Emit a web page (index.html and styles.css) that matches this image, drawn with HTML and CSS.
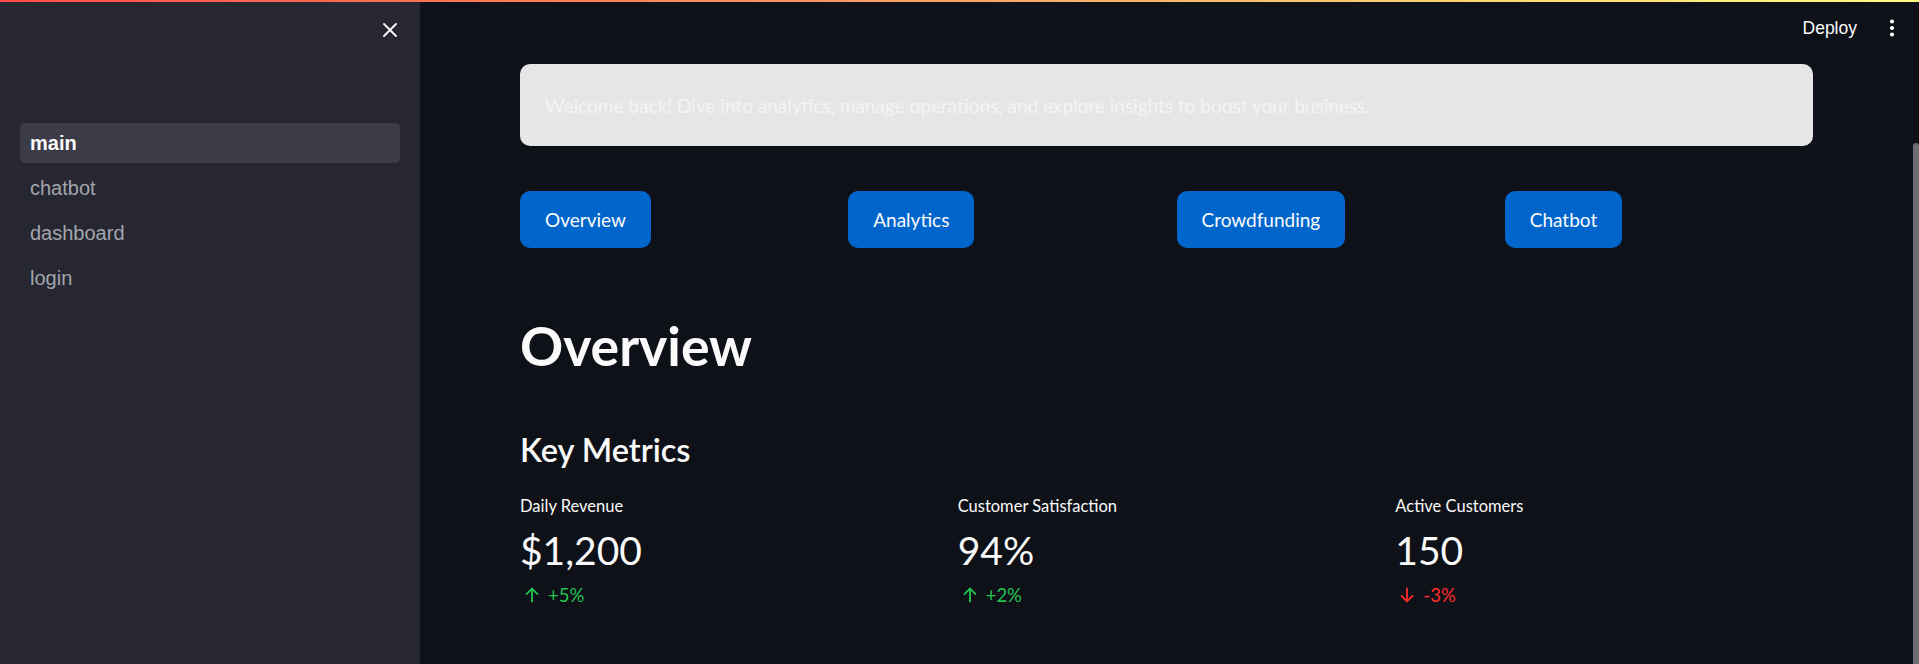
FILE: index.html
```html
<!DOCTYPE html>
<html>
<head>
<meta charset="utf-8">
<link rel="stylesheet" href="styles.css">
</head>
<body>
<div class="decoration"></div>
<div class="app">
  <aside class="sidebar">
    <div class="sidebar-head">
      <button class="close-btn" aria-label="Close sidebar">
        <svg width="16" height="16" viewBox="0 0 16 16"><path d="M2 2 L14 14 M14 2 L2 14" stroke="#fafafa" stroke-width="1.9" stroke-linecap="round"/></svg>
      </button>
    </div>
    <nav class="nav">
      <a class="nav-item active">main</a>
      <a class="nav-item">chatbot</a>
      <a class="nav-item">dashboard</a>
      <a class="nav-item">login</a>
    </nav>
  </aside>
  <main class="main">
    <header class="topbar">
      <span class="deploy">Deploy</span>
      <span class="kebab">
        <svg width="6" height="18" viewBox="0 0 6 18"><circle cx="3" cy="2.5" r="2.1" fill="#fafafa"/><circle cx="3" cy="9" r="2.1" fill="#fafafa"/><circle cx="3" cy="15.5" r="2.1" fill="#fafafa"/></svg>
      </span>
    </header>
    <section class="content">
      <div class="welcome">Welcome back! Dive into analytics, manage operations, and explore insights to boost your business.</div>
      <div class="btn-row">
        <div class="col"><button class="btn">Overview</button></div>
        <div class="col"><button class="btn">Analytics</button></div>
        <div class="col"><button class="btn">Crowdfunding</button></div>
        <div class="col"><button class="btn">Chatbot</button></div>
      </div>
      <h1 class="title">Overview</h1>
      <h2 class="subtitle">Key Metrics</h2>
      <div class="metrics">
        <div class="metric">
          <div class="m-label">Daily Revenue</div>
          <div class="m-value">$1,200</div>
          <div class="m-delta up">
            <svg width="22" height="22" viewBox="0 0 24 24"><path d="M12 20 V5 M5.5 11.5 L12 5 L18.5 11.5" fill="none" stroke="currentColor" stroke-width="2"/></svg>
            <span>+5%</span>
          </div>
        </div>
        <div class="metric">
          <div class="m-label">Customer Satisfaction</div>
          <div class="m-value">94%</div>
          <div class="m-delta up">
            <svg width="22" height="22" viewBox="0 0 24 24"><path d="M12 20 V5 M5.5 11.5 L12 5 L18.5 11.5" fill="none" stroke="currentColor" stroke-width="2"/></svg>
            <span>+2%</span>
          </div>
        </div>
        <div class="metric">
          <div class="m-label">Active Customers</div>
          <div class="m-value">150</div>
          <div class="m-delta down">
            <svg width="22" height="22" viewBox="0 0 24 24"><path d="M12 4 V19 M5.5 12.5 L12 19 L18.5 12.5" fill="none" stroke="currentColor" stroke-width="2"/></svg>
            <span>-3%</span>
          </div>
        </div>
      </div>
    </section>
    <div class="scroll-thumb"></div>
  </main>
</div>
</body>
</html>
```
FILE: styles.css
```css
* { box-sizing: border-box; }
html, body { margin: 0; padding: 0; height: 100%; }
body {
  background: #0e1117;
  color: #fafafa;
  font-family: Lato, "Noto Sans", sans-serif;
  overflow: hidden;
}
.decoration {
  position: fixed;
  top: 0; left: 0; right: 0;
  height: 2px;
  background: linear-gradient(90deg, #ff4b4b, #fffd80);
  z-index: 10;
}
.app { display: flex; height: 100vh; }
.sidebar {
  width: 420px;
  flex: 0 0 420px;
  background: #262730;
  display: flex;
  flex-direction: column;
}
.sidebar-head {
  height: 123px;
  display: flex;
  justify-content: flex-end;
  align-items: flex-start;
  padding: 22px 22px 0 0;
}
.close-btn {
  background: none; border: 0; padding: 0;
  width: 16px; height: 16px;
  display: flex;
}
.nav { display: flex; flex-direction: column; gap: 5px; padding: 0 20px; }
.nav-item {
  height: 40px;
  display: flex;
  align-items: center;
  padding-left: 10px;
  border-radius: 5px;
  font-family: "Liberation Sans", Arial, sans-serif;
  font-size: 20px;
  color: #a3a5ad;
}
.nav-item.active {
  background: #3b3c48;
  color: #fafafa;
  font-weight: 700;
}
.main {
  flex: 1;
  position: relative;
  display: flex;
  flex-direction: column;
  min-width: 0;
}
.topbar {
  height: 56px;
  display: flex;
  justify-content: flex-end;
  align-items: center;
  padding-right: 24px;
  gap: 32px;
}
.deploy {
  font-family: "Liberation Sans", Arial, sans-serif;
  font-size: 17.5px;
  color: #fafafa;
}
.kebab { display: flex; }
.content {
  padding: 8px 106px 0 100px;
}
.welcome {
  height: 82px;
  background: #e6e6e6;
  border-radius: 10px;
  display: flex;
  align-items: center;
  padding-left: 25px;
  color: #f4f4f4;
  font-size: 19px;
}
.btn-row {
  margin-top: 45px;
  display: grid;
  grid-template-columns: repeat(4, 1fr);
  gap: 20px;
}
.btn {
  height: 57px;
  padding: 0 25px;
  background: #0066cc;
  color: #fafafa;
  border: 0;
  border-radius: 10px;
  font-family: Lato, "Noto Sans", sans-serif;
  font-size: 19px;
}
.title {
  margin: 65px 0 0;
  font-size: 53.5px;
  line-height: 1.2;
  font-weight: 700;
}
.subtitle {
  margin: 53px 0 0;
  font-size: 32.5px;
  line-height: 1.2;
  font-weight: 600;
}
.metrics {
  margin-top: 25px;
  display: grid;
  grid-template-columns: repeat(3, 1fr);
  gap: 20px;
}
.m-label { font-size: 16.5px; line-height: 24px; }
.m-value { font-size: 39px; line-height: 56px; margin-top: 4px; }
.m-delta {
  display: flex;
  align-items: center;
  gap: 5px;
  font-size: 18.5px;
  line-height: 24px;
  margin-top: 5px;
}
.m-delta svg { margin-left: 1px; }
.m-delta.up { color: #21c354; }
.m-delta.down { color: #ff2b2b; }
.scroll-thumb {
  position: absolute;
  right: 0;
  top: 143px;
  bottom: -40px;
  width: 6px;
  background: #6b6e76;
  border-radius: 3px;
}
```
